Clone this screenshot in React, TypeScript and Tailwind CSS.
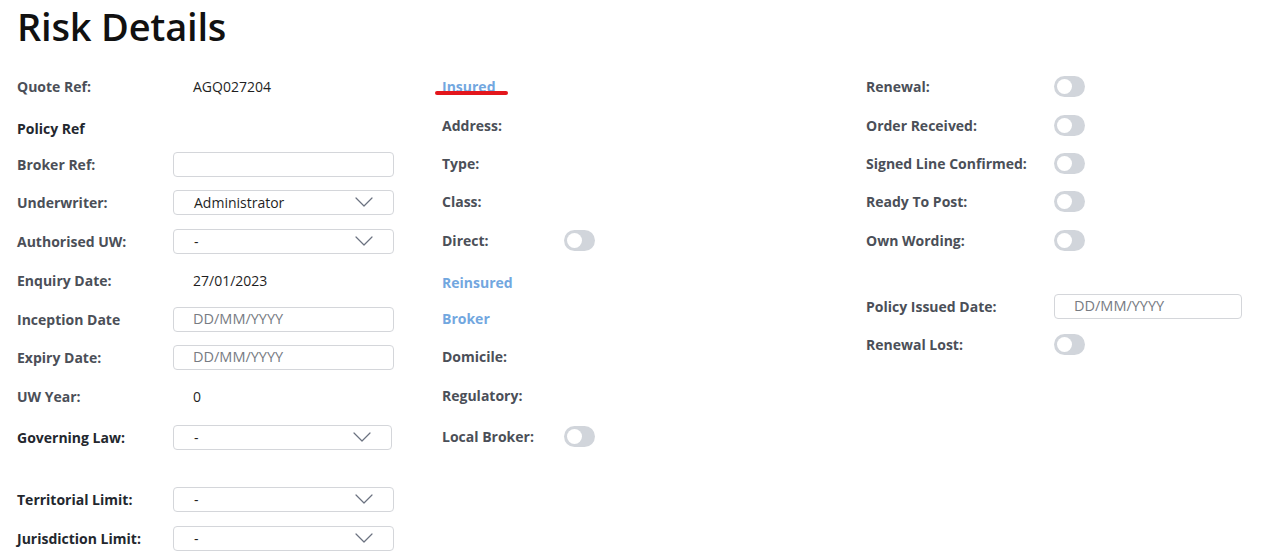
import React from "react"

function Chevron() {
    return (
        <svg width="18" height="10" viewBox="0 0 18 10" fill="none" className="shrink-0">
            <path d="M1 1l8 8 8-8" stroke="#6b7280" strokeWidth="1.2" strokeLinecap="round" strokeLinejoin="round" />
        </svg>
    )
}

function Toggle() {
    return (
        <div className="w-[31px] h-[21px] rounded-full bg-[#d1d5db] flex items-center px-[3px]">
            <div className="w-[15px] h-[15px] rounded-full bg-white" />
        </div>
    )
}

function Input({ placeholder, width = "w-[221px]" }: { placeholder?: string, width?: string }) {
    return (
        <div className={`${width} h-[25px] border border-[#d4d6da] rounded-[4px] flex items-center pl-[19px] text-[14.5px] text-[#777b82]`}>
            {placeholder}
        </div>
    )
}

function Select({ value, width = "w-[221px]" }: { value: string, width?: string }) {
    return (
        <div className={`${width} h-[25px] border border-[#d4d6da] rounded-[4px] flex items-center justify-between pl-[20px] pr-[20px] text-[14px] text-[#1f1f1f]`}>
            <span>{value}</span>
            <Chevron />
        </div>
    )
}

function Label({ children, dark, width = "w-[156px]" }: { children: React.ReactNode, dark?: boolean, width?: string }) {
    return (
        <span className={`${width} shrink-0 text-[14px] font-bold ${dark ? "text-[#23272e]" : "text-[#4b4f58]"}`}>
            {children}
        </span>
    )
}

function LinkLabel({ children }: { children: React.ReactNode }) {
    return <span className="text-[14px] font-bold text-[#72a7df]">{children}</span>
}

export default function App() {
    return (
        <div className="w-[1267px] h-[558px] bg-white overflow-hidden" style={{ fontFamily: '"Open Sans", "Liberation Sans", sans-serif' }}>
            <div className="h-[74px] pl-[17px] pt-[3px]">
                <h1 className="text-[38px] leading-[46px] font-semibold text-[#111] tracking-[-0.2px]">Risk Details</h1>
            </div>

            <div className="grid grid-cols-[425px_424px_1fr] pl-[17px]">
                {/* left column */}
                <div className="flex flex-col">
                    <div className="h-6 flex items-center">
                        <Label>Quote Ref:</Label>
                        <span className="pl-5 text-[14px] text-[#1f1f1f]">AGQ027204</span>
                    </div>
                    <div className="h-6 mt-[18px] flex items-center">
                        <Label dark>Policy Ref</Label>
                    </div>
                    <div className="h-6 mt-[12px] flex items-center">
                        <Label>Broker Ref:</Label>
                        <Input />
                    </div>
                    <div className="h-6 mt-[14px] flex items-center">
                        <Label>Underwriter:</Label>
                        <Select value="Administrator" />
                    </div>
                    <div className="h-6 mt-[15px] flex items-center">
                        <Label>Authorised UW:</Label>
                        <Select value="-" />
                    </div>
                    <div className="h-6 mt-[15px] flex items-center">
                        <Label>Enquiry Date:</Label>
                        <span className="pl-5 text-[14px] text-[#1f1f1f]">27/01/2023</span>
                    </div>
                    <div className="h-6 mt-[15px] flex items-center">
                        <Label>Inception Date</Label>
                        <Input placeholder="DD/MM/YYYY" />
                    </div>
                    <div className="h-6 mt-[14px] flex items-center">
                        <Label>Expiry Date:</Label>
                        <Input placeholder="DD/MM/YYYY" />
                    </div>
                    <div className="h-6 mt-[15px] flex items-center">
                        <Label>UW Year:</Label>
                        <span className="pl-5 text-[14px] text-[#1f1f1f]">0</span>
                    </div>
                    <div className="h-6 mt-[17px] flex items-center">
                        <Label dark>Governing Law:</Label>
                        <Select value="-" width="w-[219px]" />
                    </div>
                    <div className="h-6 mt-[38px] flex items-center">
                        <Label dark>Territorial Limit:</Label>
                        <Select value="-" />
                    </div>
                    <div className="h-6 mt-[15px] flex items-center">
                        <Label dark>Jurisdiction Limit:</Label>
                        <Select value="-" />
                    </div>
                </div>

                {/* middle column */}
                <div className="flex flex-col">
                    <div className="h-6 flex items-center">
                        <span className="relative">
                            <LinkLabel>Insured</LinkLabel>
                            <span className="absolute left-[-7px] top-[17px] w-[73px] h-[4px] rounded-full bg-[#e3161c]" />
                        </span>
                    </div>
                    <div className="h-6 mt-[15px] flex items-center">
                        <Label>Address:</Label>
                    </div>
                    <div className="h-6 mt-[14px] flex items-center">
                        <Label>Type:</Label>
                    </div>
                    <div className="h-6 mt-[14px] flex items-center">
                        <Label>Class:</Label>
                    </div>
                    <div className="h-6 mt-[15px] flex items-center">
                        <Label width="w-[122px]">Direct:</Label>
                        <Toggle />
                    </div>
                    <div className="h-6 mt-[18px] flex items-center">
                        <LinkLabel>Reinsured</LinkLabel>
                    </div>
                    <div className="h-6 mt-[12px] flex items-center">
                        <LinkLabel>Broker</LinkLabel>
                    </div>
                    <div className="h-6 mt-[14px] flex items-center">
                        <Label>Domicile:</Label>
                    </div>
                    <div className="h-6 mt-[15px] flex items-center">
                        <Label>Regulatory:</Label>
                    </div>
                    <div className="h-6 mt-[17px] flex items-center">
                        <Label width="w-[122px]">Local Broker:</Label>
                        <Toggle />
                    </div>
                </div>

                {/* right column */}
                <div className="flex flex-col">
                    <div className="h-6 flex items-center">
                        <Label width="w-[188px]">Renewal:</Label>
                        <Toggle />
                    </div>
                    <div className="h-6 mt-[15px] flex items-center">
                        <Label width="w-[188px]">Order Received:</Label>
                        <Toggle />
                    </div>
                    <div className="h-6 mt-[14px] flex items-center">
                        <Label width="w-[188px]">Signed Line Confirmed:</Label>
                        <Toggle />
                    </div>
                    <div className="h-6 mt-[14px] flex items-center">
                        <Label width="w-[188px]">Ready To Post:</Label>
                        <Toggle />
                    </div>
                    <div className="h-6 mt-[15px] flex items-center">
                        <Label width="w-[188px]">Own Wording:</Label>
                        <Toggle />
                    </div>
                    <div className="h-6 mt-[42px] flex items-center">
                        <Label width="w-[188px]">Policy Issued Date:</Label>
                        <Input placeholder="DD/MM/YYYY" width="w-[188px]" />
                    </div>
                    <div className="h-6 mt-[14px] flex items-center">
                        <Label width="w-[188px]">Renewal Lost:</Label>
                        <Toggle />
                    </div>
                </div>
            </div>
        </div>
    )
}
